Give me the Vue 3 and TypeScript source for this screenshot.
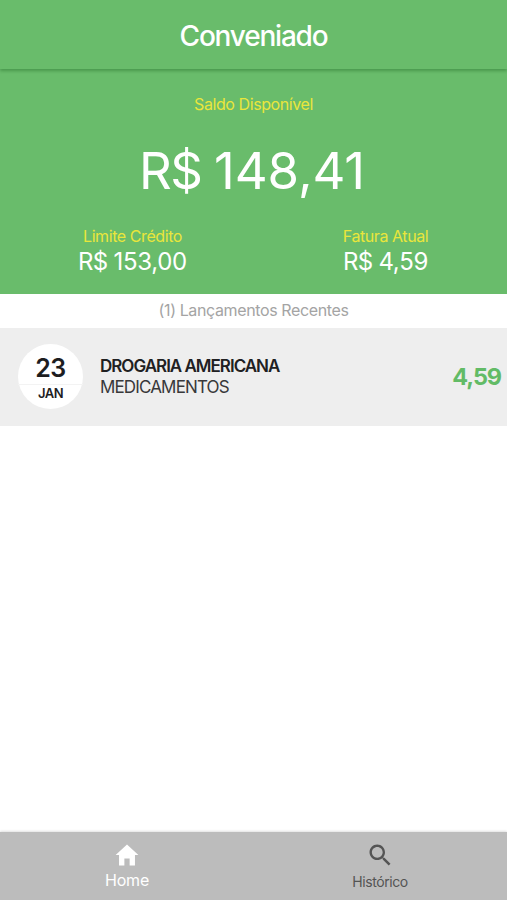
<script setup lang="ts">
interface Entry {
  day: string
  month: string
  store: string
  category: string
  amount: string
}

const entries: Entry[] = [
  { day: '23', month: 'JAN', store: 'DROGARIA AMERICANA', category: 'MEDICAMENTOS', amount: '4,59' },
]
</script>

<template>
  <div class="screen">
    <header class="header"><h1 class="title">Conveniado</h1></header>
    <section class="summary">
      <div class="label available">Saldo Disponível</div>
      <div class="balance">R$ <span class="number">148,41</span></div>
      <div class="columns">
        <div class="column">
          <div class="label credit">Limite Crédito</div>
          <div class="value limit">R$ <span class="small-number">153,00</span></div>
        </div>
        <div class="column">
          <div class="label invoice">Fatura Atual</div>
          <div class="value current">R$ <span class="small-number">4,59</span></div>
        </div>
      </div>
    </section>
    <div class="recent">({{ entries.length }}) Lançamentos Recentes</div>
    <main class="list">
      <article v-for="entry in entries" :key="entry.store" class="entry">
        <div class="date">
          <div class="day">{{ entry.day }}</div>
          <div class="month">{{ entry.month }}</div>
        </div>
        <div class="details">
          <div class="store">{{ entry.store }}</div>
          <div class="category">{{ entry.category }}</div>
        </div>
        <div class="amount">{{ entry.amount }}</div>
      </article>
    </main>
    <nav class="tabs">
      <a class="tab active">
        <svg class="icon" viewBox="0 0 512 512"><path d="M208 448V320h96v128h97.6V256H464L256 64 48 256h62.4v192z" /></svg>
        <span class="home">Home</span>
      </a>
      <a class="tab">
        <svg class="icon" viewBox="0 0 512 512"><path d="M337.509 305.372h-17.501l-6.571-5.486c20.791-25.232 33.922-57.054 33.922-93.257C347.358 127.632 283.896 64 205.135 64 127.452 64 64 127.632 64 206.629s63.452 142.628 142.225 142.628c35.011 0 67.831-13.167 92.991-34.008l6.561 5.487v17.551L415.18 448 448 415.086 337.509 305.372zm-131.284 0c-54.702 0-98.463-43.887-98.463-98.743 0-54.858 43.761-98.742 98.463-98.742 54.7 0 98.462 43.884 98.462 98.742 0 54.856-43.762 98.743-98.462 98.743z" /></svg>
        <span class="history">Histórico</span>
      </a>
    </nav>
  </div>
</template>

<style>
body { margin: 0; background: #fff; }
</style>

<style scoped>
.screen {
  display: flex;
  flex-direction: column;
  height: 900px;
  overflow: hidden;
  font-family: Inter, "Liberation Sans", sans-serif;
  white-space: nowrap;
}
.header {
  position: relative;
  display: flex;
  justify-content: center;
  height: 69px;
  padding-top: 2px;
  box-sizing: border-box;
  background: #69bc6b;
  box-shadow: 0 2px 3px rgba(0, 70, 10, 0.3);
}
.title {
  margin: 0;
  font-size: 28px;
  line-height: 68px;
  font-weight: 500;
  letter-spacing: -1.2px;
  color: #fff;
}
.summary {
  height: 225px;
  box-sizing: border-box;
  padding-top: 25px;
  background: #69bc6b;
  text-align: center;
}
.label {
  font-size: 16px;
  line-height: 20px;
  letter-spacing: -0.42px;
  color: #e9e63b;
}
.balance {
  margin-top: 25px;
  height: 64px;
  padding-right: 3px;
  font-size: 51px;
  line-height: 64px;
  letter-spacing: -1.6px;
  color: #fff;
}
.number { letter-spacing: -0.1px; }
.columns {
  display: grid;
  grid-template-columns: 265px 241px;
  margin-top: 23px;
}
.value {
  padding-top: 1px;
  font-size: 24px;
  line-height: 30px;
  letter-spacing: -0.7px;
  color: #fff;
}
.small-number { letter-spacing: -0.3px; }
.recent {
  height: 34px;
  font-size: 16px;
  line-height: 33px;
  letter-spacing: -0.38px;
  text-align: center;
  color: #a4a4a4;
}
.list { flex: 1; }
.entry {
  display: flex;
  align-items: center;
  height: 98px;
  box-sizing: border-box;
  padding: 0 6px 0 18px;
  background: #eee;
}
.date {
  width: 65px;
  height: 65px;
  margin-bottom: 2px;
  border-radius: 50%;
  background: #fff;
  text-align: center;
  color: #1d1d1f;
}
.day {
  height: 41px;
  box-sizing: border-box;
  padding-top: 9px;
  border-bottom: 1px solid #f3f3f3;
  font-size: 25px;
  line-height: 31px;
  font-weight: 600;
  letter-spacing: -0.5px;
}
.month {
  font-size: 13px;
  line-height: 17px;
  font-weight: 600;
  letter-spacing: -0.6px;
}
.details {
  flex: 1;
  margin-left: 17px;
  font-size: 17px;
  line-height: 21px;
  color: #202022;
}
.store { font-weight: 600; letter-spacing: -1px; }
.category { color: #38383a; letter-spacing: -0.85px; }
.amount {
  font-size: 23.5px;
  line-height: 30px;
  font-weight: 700;
  letter-spacing: -1.1px;
  color: #62bb66;
}
.tabs {
  display: grid;
  grid-template-columns: 254px 252px;
  height: 68px;
  background: #bcbcbc;
  box-shadow: 0 -1px 2px rgba(0, 0, 0, 0.12);
}
.tab {
  display: flex;
  flex-direction: column;
  align-items: center;
  padding-top: 9px;
  color: #545454;
}
.tab.active { color: #fff; }
.icon { width: 28px; height: 28px; fill: currentColor; }
.home {
  margin-top: 1px;
  font-size: 16px;
  line-height: 20px;
  letter-spacing: -0.2px;
}
.history {
  margin-top: 3px;
  font-size: 14px;
  line-height: 20px;
  letter-spacing: -0.4px;
}
</style>
